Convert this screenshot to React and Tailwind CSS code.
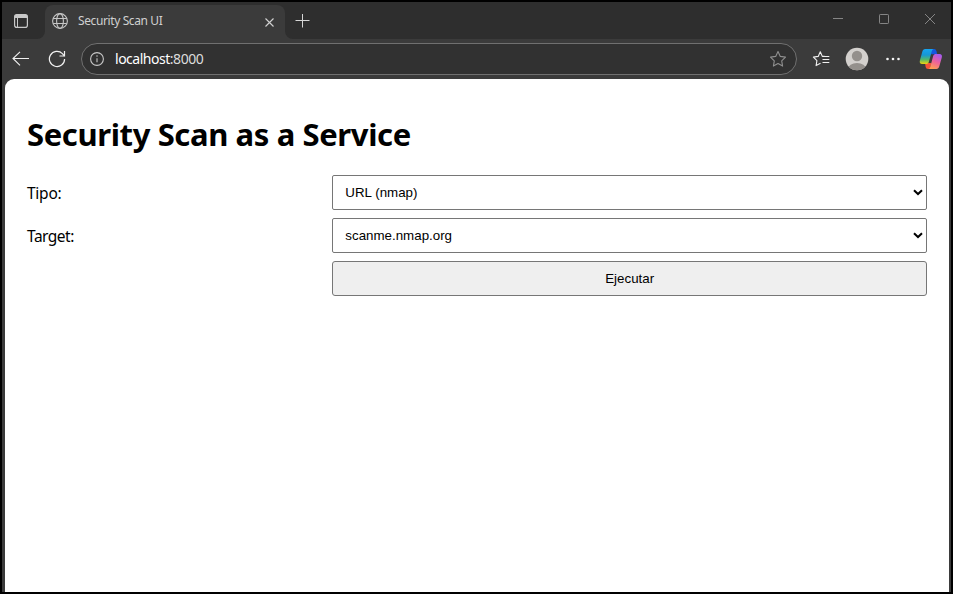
function TabStrip() {
  return (
    <div className="flex h-[37px] shrink-0 bg-[#3b3b3b]">
      <div className="flex w-[43px] items-center justify-center rounded-br-lg bg-[#2e2e2e]">
        <svg width="14" height="14" viewBox="0 0 14 14" className="-ml-[5px]">
          <rect x="0.6" y="0.6" width="12.8" height="12.8" rx="2.2" fill="none" stroke="#c8c8c8" strokeWidth="1.2" />
          <path d="M.6 4V2.8A2.2 2.2 0 0 1 2.8.6h8.4a2.2 2.2 0 0 1 2.2 2.2V4z" fill="#c8c8c8" />
          <path d="M3.5 4v9.4" stroke="#c8c8c8" />
        </svg>
      </div>
      <div className="w-[240px] bg-[#2e2e2e] pt-[3px]">
        <div className="flex h-[34px] items-center rounded-t-lg bg-[#3b3b3b] pb-[2px] pl-[7px] pr-[11px]">
          <svg width="16" height="16" viewBox="0 0 16 16" fill="none" stroke="#c6c6c6" strokeWidth="1.1">
            <circle cx="8" cy="8" r="7.4" />
            <ellipse cx="8" cy="8" rx="3.4" ry="7.4" />
            <path d="M1.2 5.5h13.6M1.2 10.5h13.6" />
          </svg>
          <span className="ml-[10px] whitespace-nowrap text-[12px] leading-4 tracking-[-0.39px] text-[#d0d0d0]">Security Scan UI</span>
          <svg width="10" height="10" viewBox="0 0 10 10" className="ml-auto mt-px">
            <path d="M1.5 1.5l8 8M9.5 1.5l-8 8" stroke="#d2d2d2" strokeWidth="1.1" />
          </svg>
        </div>
      </div>
      <div className="flex flex-1 items-start rounded-bl-lg bg-[#2e2e2e] pl-[10px] pt-[12px]">
        <svg width="15" height="14" viewBox="0 0 15 14">
          <path d="M7.5 0v13.5M.5 6.5h14" stroke="#d6d6d6" />
        </svg>
        <svg width="104" height="12" viewBox="0 0 104 12" className="-mt-px ml-auto mr-[14px]" fill="none" stroke="#858585">
          <path d="M0 5.5h10" />
          <rect x="46.5" y="1.5" width="9" height="9" rx="0.7" />
          <path d="M92 1l10 10M102 1L92 11" />
        </svg>
      </div>
    </div>
  );
}

function Star() {
  return (
    <svg width="18" height="18" viewBox="0 0 18 18" fill="none" stroke="#8f8f8f" strokeWidth="1.1" strokeLinejoin="round">
      <path d="M9 1.5l2.3 4.9 5.2.7-3.8 3.7.9 5.3L9 13.6l-4.6 2.5.9-5.3-3.8-3.7 5.2-.7z" />
    </svg>
  );
}

function CopilotLogo() {
  return (
    <svg width="24" height="22" viewBox="0 0 24 22">
      <defs>
        <linearGradient id="cool" x1="0" y1="0" x2="0" y2="1">
          <stop offset="0" stopColor="#16a5f0" />
          <stop offset=".4" stopColor="#1697d5" />
          <stop offset=".7" stopColor="#52b86b" />
          <stop offset="1" stopColor="#efd20e" />
        </linearGradient>
        <linearGradient id="warm" x1=".7" y1="0" x2=".3" y2="1">
          <stop offset="0" stopColor="#a65bf0" />
          <stop offset=".5" stopColor="#ee629b" />
          <stop offset="1" stopColor="#ffa151" />
        </linearGradient>
      </defs>
      <path d="M12 1h3.2c1.5 0 1.9 1 2.3 2.3l.7 2.9h-6z" fill="#1556df" />
      <path d="M6 15h6.5l-1.6 6H9.1c-1.5 0-2.1-.8-2.5-2.2z" fill="#f45238" />
      <path d="M6.2 1h8.6c-1.2.2-1.7 1.2-2 2.3L9.8 14c-.5 1.5-1.4 2-2.8 2H3.2c-2.1 0-2.9-1.4-2.3-3.4L3.3 3.8C3.9 2 4.6 1 6.2 1z" fill="url(#cool)" />
      <path d="M17.5 21H9.4c1.1-.2 1.6-1.1 1.9-2.2L14.2 8c.5-1.4 1.4-2 2.8-2h3.5c2 0 2.9 1.4 2.3 3.4l-2.5 8.8c-.6 1.8-1.4 2.8-2.8 2.8z" fill="url(#warm)" />
    </svg>
  );
}

function Toolbar() {
  return (
    <div className="flex h-10 shrink-0 items-center bg-[#3b3b3b] pl-[10px] pr-2">
      <svg width="18" height="16" viewBox="0 0 18 16" fill="none" stroke="#f0f0f0" strokeWidth="1.1">
        <path d="M8 .8L1 7.5l7 6.8M1 7.5h16" />
      </svg>
      <svg width="18" height="18" viewBox="0 0 18 18" className="ml-[18px]" fill="none" stroke="#f0f0f0" strokeWidth="1.2">
        <path d="M16.6 9A7.6 7.6 0 1 1 14.4 3.6L16.5 6" />
        <path d="M16.5 1v5h-5" />
      </svg>
      <div className="ml-[15px] flex h-8 w-[716px] items-center rounded-full border border-[#707070] bg-[#313131] pl-2 pr-[9px]">
        <svg width="14" height="14" viewBox="0 0 14 14" fill="none" stroke="#c8c8c8" strokeWidth="1.1">
          <circle cx="7" cy="7" r="6.4" />
          <path d="M7 6.2v4" />
          <circle cx="7" cy="4" r=".75" fill="#c8c8c8" stroke="none" />
        </svg>
        <span className="ml-[11px] text-[14px] leading-5 tracking-[-0.48px] text-white">
          localhost<span className="text-[#dcdcdc]">:8000</span>
        </span>
        <div className="ml-auto"><Star /></div>
      </div>
      <svg width="18" height="18" viewBox="0 0 18 18" className="ml-[15px]" fill="none" stroke="#f0f0f0" strokeWidth="1.1" strokeLinejoin="round">
        <path d="M12.6 6.4H10.3L8.3 1.8 6.2 6.4l-4.8.7 3.5 3.5-.8 5 4.4-2.3M10.5 6.5h6.8M10.5 9.5h6.8M10.5 12.5h6.8" />
      </svg>
      <svg width="24" height="24" viewBox="0 0 24 24" className="ml-[15px]">
        <defs><clipPath id="avatar"><circle cx="12" cy="12" r="11.3" /></clipPath></defs>
        <circle cx="12" cy="12" r="11.3" fill="#d3d0cd" />
        <g fill="#94908c" clipPath="url(#avatar)">
          <circle cx="12" cy="9" r="5.2" />
          <ellipse cx="12" cy="22" rx="9" ry="6" />
        </g>
      </svg>
      <svg width="14" height="4" viewBox="0 0 14 4" className="ml-[17px]" fill="#f5f5f5">
        <circle cx="1.5" cy="2" r="1.3" /><circle cx="7" cy="2" r="1.3" /><circle cx="12.5" cy="2" r="1.3" />
      </svg>
      <div className="ml-auto"><CopilotLogo /></div>
    </div>
  );
}

function Select({ value }) {
  return (
    <button type="button" className="flex h-[35px] items-center justify-between rounded-[2px] border border-[#767676] bg-white pl-3 pr-[3px] font-['Liberation_Sans',Arial,sans-serif] text-[13.333px] tracking-normal text-black">
      <span>{value}</span>
      <svg width="10" height="7" viewBox="0 0 10 7" fill="none" stroke="#000" strokeWidth="2">
        <path d="M1 1.2l4 3.8 4-3.8" />
      </svg>
    </button>
  );
}

export default function App() {
  return (
    <div className="flex h-[594px] w-[953px] flex-col overflow-hidden border-2 border-black bg-[#3b3b3b] font-['Noto_Sans','Open_Sans',sans-serif]">
      <TabStrip />
      <Toolbar />
      <main className="ml-[3px] mr-[2px] flex-1 rounded-t-[9px] bg-white px-[22px] pt-[34px] text-black">
        <h1 className="h-[43px] whitespace-nowrap text-[31px] font-bold leading-[43px] tracking-[-0.38px]">Security Scan as a Service</h1>
        <form className="mt-[19px] grid grid-cols-[1fr_2fr] gap-2 text-[15.5px]">
          <label className="flex h-[35px] items-center pt-[2px] tracking-[-0.25px]">Tipo:</label>
          <Select value="URL (nmap)" />
          <label className="flex h-[35px] items-center pt-[2px] tracking-[-0.5px]">Target:</label>
          <Select value="scanme.nmap.org" />
          <span />
          <button type="button" className="h-[35px] rounded-[3px] border border-[#767676] bg-[#efefef] font-['Liberation_Sans',Arial,sans-serif] text-[13.333px]">Ejecutar</button>
        </form>
      </main>
    </div>
  );
}
